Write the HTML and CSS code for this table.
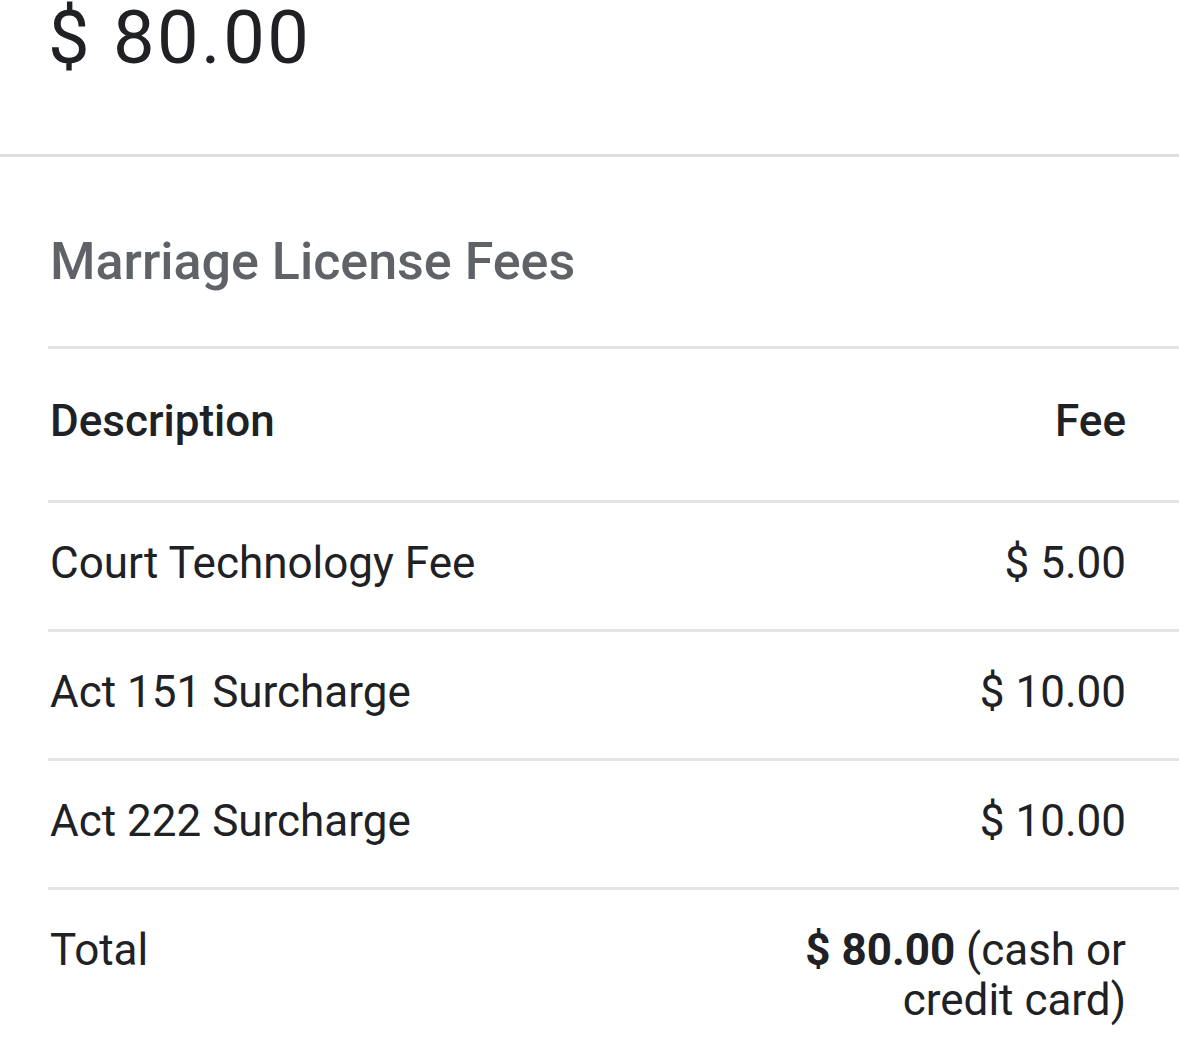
FILE: index.html
```html
<!DOCTYPE html>
<html lang="en">
<head>
<meta charset="utf-8">
<title>Marriage License Fees</title>
<link rel="stylesheet" href="styles.css">
</head>
<body>
<div class="amount">$ 80.00</div>
<div class="fees">
  <h2 class="fees-title">Marriage License Fees</h2>
  <div class="row row-head">
    <div class="cell-desc">Description</div>
    <div class="cell-fee">Fee</div>
  </div>
  <div class="row">
    <div class="cell-desc">Court Technology Fee</div>
    <div class="cell-fee">$ 5.00</div>
  </div>
  <div class="row">
    <div class="cell-desc">Act 151 Surcharge</div>
    <div class="cell-fee">$ 10.00</div>
  </div>
  <div class="row">
    <div class="cell-desc">Act 222 Surcharge</div>
    <div class="cell-fee">$ 10.00</div>
  </div>
  <div class="row row-total">
    <div class="cell-desc">Total</div>
    <div class="cell-fee cell-total"><strong>$ 80.00</strong> (cash or credit card)</div>
  </div>
</div>
</body>
</html>
```

FILE: styles.css
```css
html, body {
  margin: 0;
  padding: 0;
  background: #ffffff;
}
body {
  font-family: Roboto, "Noto Sans", "Liberation Sans", sans-serif;
  color: #202124;
  overflow: hidden;
}
.amount {
  font-size: 74px;
  line-height: 76px;
  padding-left: 48px;
  height: 157px;
  box-sizing: border-box;
  border-bottom: 3px solid #dedfe1;
  letter-spacing: 2.5px;
}
.fees {
  margin-left: 48px;
}
.fees-title {
  margin: 0;
  padding: 75px 0 54px 2px;
  font-size: 52px;
  line-height: 60px;
  font-weight: 500;
  color: #5f6368;
}
.row {
  display: flex;
  justify-content: space-between;
  align-items: flex-start;
  border-top: 3px solid #e3e4e6;
  padding: 35px 53px 41px 2px;
  font-size: 44px;
  line-height: 50px;
}
.row-head {
  font-weight: 500;
  padding-top: 47px;
  padding-bottom: 54px;
}
.cell-fee {
  text-align: right;
}
.cell-total {
  width: 350px;
}
.cell-total strong {
  font-weight: 700;
}
```
